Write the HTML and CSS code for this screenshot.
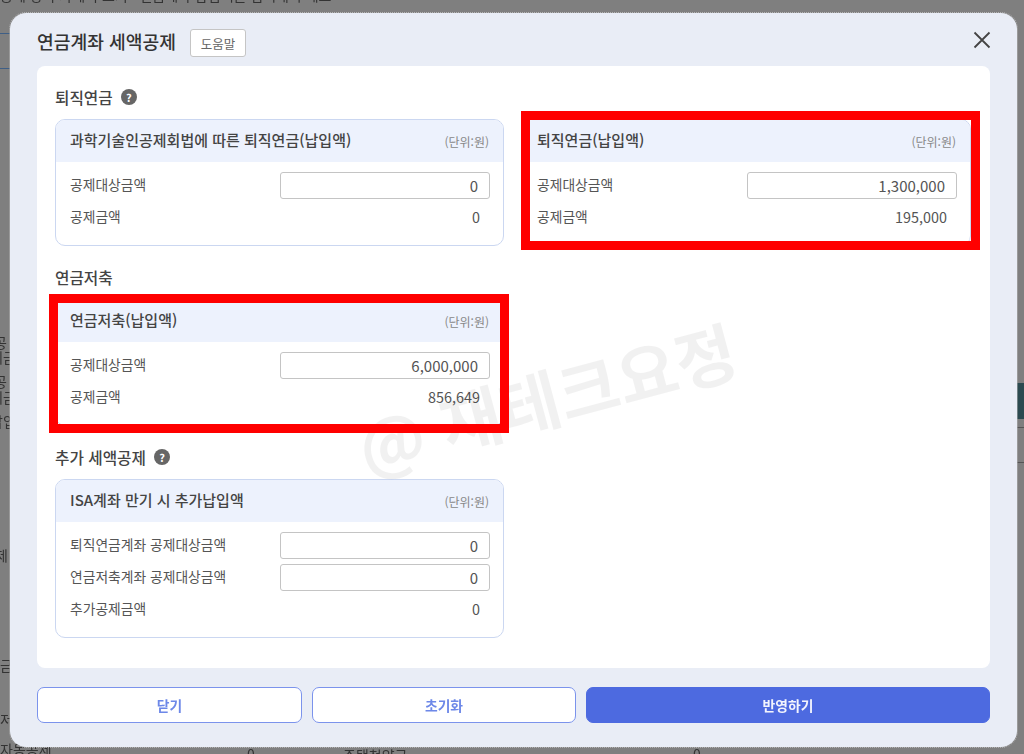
FILE: index.html
```html
<!DOCTYPE html>
<html lang="ko">
<head>
    <meta charset="UTF-8">
    <meta name="viewport" content="width=device-width, initial-scale=1.0">
    <title>연금계좌 세액공제</title>
    <link rel="stylesheet" href="styles.css">
</head>
<body>
    <!-- 모달 뒤에 보이는 화면 -->
    <div class="backdrop">
        <span class="bg-text bg-top">공제 항목 자세히 보기 · 연금계좌 납입액을 입력해 주세요</span>
        <span class="bg-line bg-line-1"></span>
        <span class="bg-line bg-line-2"></span>
        <span class="bg-text bg-left-1">공</span>
        <span class="bg-text bg-left-2">제금</span>
        <span class="bg-text bg-left-3">공</span>
        <span class="bg-text bg-left-4">제금</span>
        <span class="bg-text bg-left-5">납입</span>
        <span class="bg-text bg-left-6">공제</span>
        <span class="bg-text bg-left-7">금</span>
        <span class="bg-text bg-left-8">저</span>
        <span class="bg-text bg-auto">자동공제</span>
        <span class="bg-text bg-zero-1">0</span>
        <span class="bg-text bg-house">주택청약금</span>
        <span class="bg-text bg-zero-2">0</span>
        <span class="bg-band"></span>
        <span class="bg-rule"></span>
    </div>

    <div class="modal">
        <header class="modal-head">
            <h1>연금계좌 세액공제</h1>
            <button class="help-btn">도움말</button>
            <button class="close-btn" aria-label="닫기">
                <svg width="18" height="18" viewBox="0 0 18 18"><path d="M1.5 1.5 16.5 16.5M16.5 1.5 1.5 16.5" fill="none" stroke="#444" stroke-width="1.8"/></svg>
            </button>
        </header>

        <main class="modal-body">
            <div class="watermark">@ 재테크요정</div>

            <div class="column">
                <section>
                    <h2>퇴직연금 <span class="hint">?</span></h2>
                    <div class="card">
                        <div class="card-head"><h3>과학기술인공제회법에 따른 퇴직연금(납입액)</h3><span class="unit">(단위:원)</span></div>
                        <div class="card-body">
                            <div class="row"><label>공제대상금액</label><input type="text" value="0"></div>
                            <div class="row"><label>공제금액</label><span class="value">0</span></div>
                        </div>
                    </div>
                </section>

                <section>
                    <h2>연금저축</h2>
                    <div class="card marked marked-left">
                        <div class="card-head"><h3>연금저축(납입액)</h3><span class="unit">(단위:원)</span></div>
                        <div class="card-body">
                            <div class="row"><label>공제대상금액</label><input type="text" value="6,000,000"></div>
                            <div class="row"><label>공제금액</label><span class="value">856,649</span></div>
                        </div>
                    </div>
                </section>

                <section>
                    <h2>추가 세액공제 <span class="hint">?</span></h2>
                    <div class="card">
                        <div class="card-head"><h3>ISA계좌 만기 시 추가납입액</h3><span class="unit">(단위:원)</span></div>
                        <div class="card-body">
                            <div class="row"><label>퇴직연금계좌 공제대상금액</label><input type="text" value="0"></div>
                            <div class="row"><label>연금저축계좌 공제대상금액</label><input type="text" value="0"></div>
                            <div class="row"><label>추가공제금액</label><span class="value">0</span></div>
                        </div>
                    </div>
                </section>
            </div>

            <div class="column column-right">
                <div class="card marked marked-right">
                    <div class="card-head"><h3>퇴직연금(납입액)</h3><span class="unit">(단위:원)</span></div>
                    <div class="card-body">
                        <div class="row"><label>공제대상금액</label><input type="text" value="1,300,000"></div>
                        <div class="row"><label>공제금액</label><span class="value">195,000</span></div>
                    </div>
                </div>
            </div>
        </main>

        <footer class="modal-foot">
            <button class="btn">닫기</button>
            <button class="btn">초기화</button>
            <button class="btn btn-primary">반영하기</button>
        </footer>
    </div>
</body>
</html>
```

FILE: styles.css
```css
* {
    box-sizing: border-box;
}

html, body {
    height: 100%;
}

body {
    margin: 0;
    overflow: hidden;
    position: relative;
    background: #7f7f7f;
    color: #555;
    font-family: "Noto Sans CJK KR", "Noto Sans", sans-serif;
    filter: blur(0.4px);
}

h1, h2, h3 {
    margin: 0;
}

button {
    font-family: inherit;
    cursor: pointer;
}

/* 뒤 화면 */
.backdrop {
    position: absolute;
    inset: 0;
    overflow: hidden;
}

.bg-text {
    position: absolute;
    color: #333;
    font-size: 14px;
    line-height: 14px;
    white-space: nowrap;
}

.bg-top { left: 0; top: -12px; }
.bg-left-1 { left: -6px; top: 335px; }
.bg-left-2 { left: -10px; top: 350px; }
.bg-left-3 { left: -6px; top: 374px; }
.bg-left-4 { left: -10px; top: 390px; }
.bg-left-5 { left: -10px; top: 414px; }
.bg-left-6 { left: -18px; top: 548px; }
.bg-left-7 { left: 0; top: 658px; }
.bg-left-8 { left: 0; top: 712px; }
.bg-auto { left: 0; top: 742px; }
.bg-zero-1 { left: 247px; top: 747px; }
.bg-house { left: 343px; top: 748px; }
.bg-zero-2 { left: 693px; top: 747px; }

.bg-line {
    position: absolute;
    left: 0;
    width: 10px;
    height: 1px;
    background: #3f5f86;
}

.bg-line-1 { top: 33px; }
.bg-line-2 { top: 68px; }

.bg-band {
    position: absolute;
    right: 0;
    top: 383px;
    width: 7px;
    height: 36px;
    background: #2b4a50;
}

.bg-rule {
    position: absolute;
    right: 0;
    top: 427px;
    width: 7px;
    height: 36px;
    border-top: 1px solid #555;
    border-bottom: 1px solid #555;
}

/* 모달 */
.modal {
    position: absolute;
    left: 10px;
    top: 13px;
    width: 1007px;
    height: 734px;
    padding: 0 27px 24px;
    display: flex;
    flex-direction: column;
    background: #e9edf6;
    border-radius: 16px;
    outline: 1px dotted #b5b5b5;
}

.modal-head {
    height: 53px;
    flex: none;
    display: flex;
    align-items: center;
    padding-top: 7px;
}

.modal-head h1 {
    margin-top: -4px;
    font-size: 18.2px;
    font-weight: 500;
    color: #333;
}

.help-btn {
    width: 56px;
    height: 28px;
    margin-left: 14px;
    padding: 0;
    background: #fff;
    border: 1px solid #c5c5c5;
    border-radius: 3px;
    color: #666;
    font-size: 12.5px;
}

.close-btn {
    margin: -6px -1px 0 auto;
    padding: 0;
    width: 18px;
    height: 18px;
    border: 0;
    background: none;
    line-height: 0;
}

.modal-body {
    position: relative;
    height: 602px;
    flex: none;
    padding: 0 18px;
    display: grid;
    grid-template-columns: 449px 449px;
    column-gap: 18px;
    background: #fff;
    border-radius: 8px;
}

.column {
    display: flex;
    flex-direction: column;
    padding-top: 20px;
    gap: 20px;
}

.column-right {
    padding-top: 53px;
}

h2 {
    height: 22px;
    margin-bottom: 11px;
    display: flex;
    align-items: center;
    gap: 8px;
    font-size: 15.7px;
    font-weight: 500;
    color: #444;
}

.hint {
    width: 16px;
    height: 16px;
    border-radius: 50%;
    background: #666;
    color: #fff;
    font-size: 11px;
    font-weight: 700;
    line-height: 16px;
    text-align: center;
}

.card {
    position: relative;
    background: #fff;
    border: 1px solid #cbd7f1;
    border-radius: 10px;
}

.card-head {
    height: 42px;
    padding: 0 14px;
    display: flex;
    align-items: center;
    justify-content: space-between;
    background: #edf2fd;
    border-radius: 9px 9px 0 0;
}

.card-head h3 {
    margin-top: -3px;
    font-size: 15px;
    font-weight: 500;
    color: #444;
}

.unit {
    font-size: 12px;
    color: #888;
}

.card-body {
    padding: 10px 13px 14px 14px;
    display: flex;
    flex-direction: column;
    gap: 5px;
}

.row {
    height: 27px;
    display: flex;
    align-items: center;
    justify-content: space-between;
    font-size: 13.8px;
    color: #555;
}

.row label {
    margin-top: -3px;
}

.row input {
    width: 210px;
    height: 27px;
    padding: 0 11px;
    border: 1px solid #c4c4c4;
    border-radius: 3px;
    background: #fff;
    color: #555;
    font-family: inherit;
    font-size: 15px;
    text-align: right;
}

.value {
    margin-top: -2px;
    padding-right: 10px;
    font-size: 14.4px;
}

/* 빨간 표시 상자 */
.marked::after {
    content: "";
    position: absolute;
    z-index: 2;
    border: 9.5px solid #ff0000;
}

.marked-left::after {
    left: -7px;
    top: -6px;
    right: -6px;
    bottom: -8px;
}

.marked-right::after {
    left: -2px;
    top: -9px;
    right: -10px;
    bottom: -5px;
}

.watermark {
    position: absolute;
    z-index: 1;
    left: 315px;
    top: 285px;
    transform: rotate(-15deg);
    color: rgba(0, 0, 0, 0.055);
    font-size: 66px;
    font-weight: 700;
    line-height: 90px;
    white-space: nowrap;
    pointer-events: none;
}

.modal-foot {
    margin-top: 19px;
    display: grid;
    grid-template-columns: 265px 264px 1fr;
    gap: 10px;
}

.btn {
    height: 36px;
    padding: 0;
    background: #fff;
    border: 1.5px solid #7b93ec;
    border-radius: 7px;
    color: #6d88e8;
    font-size: 13.8px;
    font-weight: 700;
}

.btn-primary {
    background: #4d6ae0;
    border-color: #4d6ae0;
    color: #f2f4fd;
}
```
